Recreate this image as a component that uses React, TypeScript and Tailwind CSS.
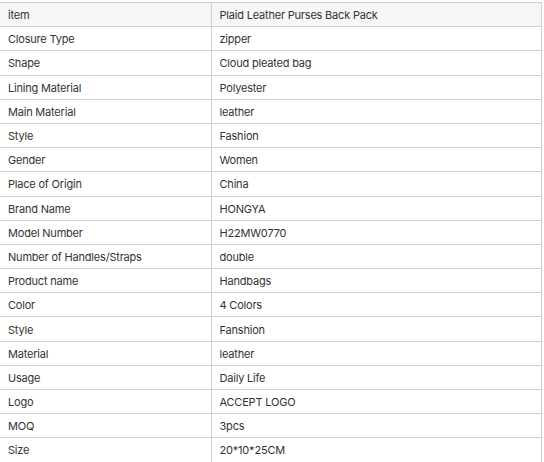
const rows: [string, string][] = [
  ["Closure Type", "zipper"],
  ["Shape", "Cloud pleated bag"],
  ["Lining Material", "Polyester"],
  ["Main Material", "leather"],
  ["Style", "Fashion"],
  ["Gender", "Women"],
  ["Place of Origin", "China"],
  ["Brand Name", "HONGYA"],
  ["Model Number", "H22MW0770"],
  ["Number of Handles/Straps", "double"],
  ["Product name", "Handbags"],
  ["Color", "4 Colors"],
  ["Style", "Fanshion"],
  ["Material", "leather"],
  ["Usage", "Daily Life"],
  ["Logo", "ACCEPT LOGO"],
  ["MOQ", "3pcs"],
  ["Size", "20*10*25CM"],
];

export default function App() {
  return (
    <div className="w-[544px] h-[462px] overflow-hidden bg-white pt-[2px] font-['Inter',sans-serif] text-[11px] tracking-[-0.2px] text-[#333]">
      <table className="w-[542px] border-collapse table-fixed">
        <colgroup>
          <col className="w-[211px]" />
          <col />
        </colgroup>
        <tbody>
          <tr className="h-[24.2px] bg-[#f5f6f8]">
            <td className="border border-l-0 border-[#cfcfcf] px-2 pt-[2px] pb-0 leading-none">item</td>
            <td className="border border-[#cfcfcf] px-2 pt-[2px] pb-0 leading-none">Plaid Leather Purses Back Pack</td>
          </tr>
          {rows.map(([k, v], i) => (
            <tr key={i} className="h-[24.2px]">
              <td className="border border-l-0 border-[#cfcfcf] px-2 pt-[2px] pb-0 leading-none">{k}</td>
              <td className="border border-[#cfcfcf] px-2 pt-[2px] pb-0 leading-none">{v}</td>
            </tr>
          ))}
        </tbody>
      </table>
    </div>
  );
}
